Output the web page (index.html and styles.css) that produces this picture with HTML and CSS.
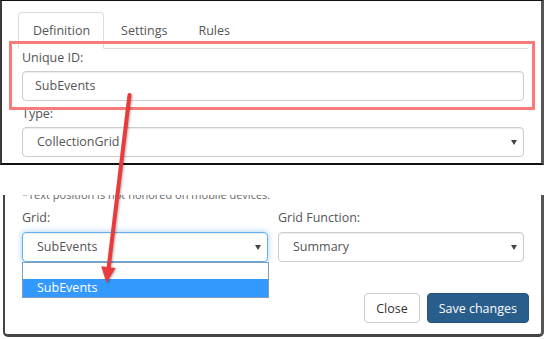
FILE: index.html
```html
<!doctype html>
<html lang="en">
  <head>
    <meta charset="UTF-8" />
    <meta name="viewport" content="width=device-width, initial-scale=1.0" />
    <title>Grid settings</title>
    <link rel="stylesheet" href="styles.css">
  </head>
  <body>
    <!-- Upper capture: tabs + ID field -->
    <section class="shot shot-top">
      <div class="tabs">
        <div class="tab active">Definition</div>
        <div class="tab">Settings</div>
        <div class="tab">Rules</div>
      </div>
      <div class="pane">
        <div class="field">
          <label>Unique ID:</label>
          <div class="input">SubEvents</div>
        </div>
        <div class="field">
          <label>Type:</label>
          <div class="select">CollectionGrid<span class="caret"></span></div>
        </div>
      </div>
    </section>

    <!-- Lower capture: grid picker -->
    <section class="shot shot-bottom">
      <p class="note">*Text position is not honored on mobile devices.</p>
      <div class="grid-row">
        <div class="field">
          <label>Grid:</label>
          <div class="select-wrap">
            <div class="select focus">SubEvents<span class="caret"></span></div>
            <ul class="options">
              <li></li>
              <li class="hover">SubEvents</li>
            </ul>
          </div>
        </div>
        <div class="field">
          <label>Grid Function:</label>
          <div class="select">Summary<span class="caret"></span></div>
        </div>
      </div>
      <div class="footer">
        <button class="btn">Close</button>
        <button class="btn btn-primary">Save changes</button>
      </div>
    </section>

    <!-- Annotations -->
    <div class="highlight"></div>
    <svg class="arrow" width="546" height="339" viewBox="0 0 546 339">
      <line x1="129.5" y1="95" x2="108.6" y2="268" stroke="#e93b3b" stroke-width="4" stroke-linecap="round" />
      <polygon points="106.5,283 101.2,266.2 115.6,267.9" fill="#e93b3b" />
    </svg>
  </body>
</html>
```

FILE: styles.css
```css
/* General */
* {
  box-sizing: border-box;
}

body {
  margin: 0;
  width: 546px;
  height: 339px;
  position: relative;
  overflow: hidden;
  background-color: white;
  font-family: "Open Sans", sans-serif;
  font-size: 12.5px;
  color: #555;
}

label {
  display: block;
  line-height: 18px;
  margin-bottom: 4px;
}

/* Captured panels */
.shot-top {
  width: 544px;
  height: 165px;
  border-top: 1px solid #111;
  border-bottom: 2px solid #111;
  border-left: 2px solid #3a3a3a;
  border-right: 3px solid #555;
  padding: 11px 13px 0 16px;
}

.shot-bottom {
  width: 541px;
  height: 142px;
  margin: 30px 0 0 3px;
  border-left: 2px solid #444;
  border-right: 3px solid #555;
  border-bottom: 3px solid #444;
  border-radius: 0 0 5px 5px;
  padding: 0 17px 0 17px;
  overflow: hidden;
}

/* Tabs */
.tabs {
  display: flex;
  border-bottom: 1px solid #ddd;
}

.tab {
  line-height: 35px;
  padding: 0 13px 0 14px;
  margin-right: 2px;
  margin-bottom: -1px;
  border: 1px solid transparent;
  border-radius: 4px 4px 0 0;
}

.tab.active {
  background-color: white;
  border-color: #ddd #ddd white;
}

.pane {
  padding: 0 4px;
}

.field + .field {
  margin-top: 4px;
}

/* Inputs */
.input,
.select {
  height: 30px;
  line-height: 28px;
  border: 1px solid #ccc;
  border-radius: 4px;
  padding: 0 12px;
  box-shadow: inset 0 1px 1px rgba(0, 0, 0, 0.075);
  background-color: white;
}

.select {
  display: flex;
  justify-content: space-between;
  align-items: center;
  padding: 0 6px 0 14px;
}

.select.focus {
  border-color: #66afe9;
  box-shadow: inset 0 1px 1px rgba(0, 0, 0, 0.075), 0 0 6px rgba(102, 175, 233, 0.6);
}

.caret {
  width: 0;
  height: 0;
  border-left: 3.5px solid transparent;
  border-right: 3.5px solid transparent;
  border-top: 5px solid #444;
}

/* Lower panel */
.note {
  margin: -8px 0 0;
  font-size: 11px;
  line-height: 16px;
  color: #666;
}

.grid-row {
  display: grid;
  grid-template-columns: 1fr 1fr;
  gap: 10px;
  margin-top: 6px;
}

.grid-row .field + .field {
  margin-top: 0;
}

.grid-row label {
  margin-bottom: 5px;
}

.select-wrap {
  position: relative;
}

.options {
  position: absolute;
  top: 30px;
  left: 0;
  width: 247px;
  margin: 0;
  padding: 0;
  list-style: none;
  border: 1px solid #7f9db9;
  background-color: white;
}

.options li {
  height: 16px;
  line-height: 16px;
  padding-left: 14px;
}

.options li.hover {
  height: 18px;
  line-height: 18px;
  background-color: #3399ff;
  color: white;
}

.footer {
  display: flex;
  justify-content: flex-end;
  gap: 7px;
  margin-top: 31px;
  padding-right: 0;
  margin-right: -5px;
}

.btn {
  height: 30px;
  padding: 0 11px;
  font-family: "Open Sans", sans-serif;
  font-size: 12.5px;
  color: #333;
  background-color: white;
  border: 1px solid #ccc;
  border-radius: 4px;
}

.btn-primary {
  color: white;
  background-color: #295d8c;
  border-color: #245580;
}

/* Annotations */
.highlight {
  position: absolute;
  top: 41px;
  left: 9px;
  width: 526px;
  height: 69px;
  border: 3px solid #f87a7a;
}

.arrow {
  position: absolute;
  top: 0;
  left: 0;
  filter: drop-shadow(1px 1px 1px rgba(0, 0, 0, 0.3));
}
```
